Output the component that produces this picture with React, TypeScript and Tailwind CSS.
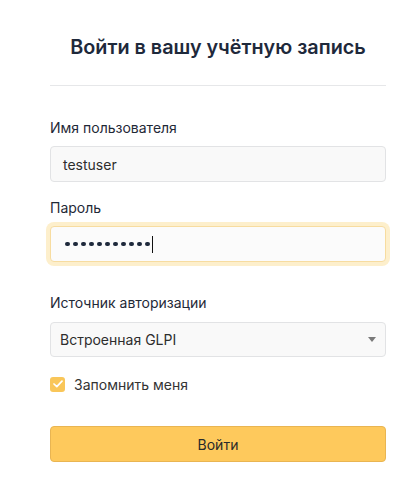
export default function App() {
  return (
    <div className="min-h-screen bg-white font-['Inter',sans-serif] text-[#1f2937]">
      <div className="ml-[50px] w-[336px] pt-[33px]">
        <h1 className="text-center text-[19.8px] font-semibold leading-[28px] text-[#1e293b]">
          Войти в вашу учётную запись
        </h1>
        <div className="mt-[24px] h-px bg-[#e6e7e9]" />

        <label className="mt-[32px] block text-[14px] leading-[20px] text-[#1f2937]">
          Имя пользователя
        </label>
        <div className="mt-2 flex h-[36px] items-center rounded border border-[#e2e3e5] bg-[#f9f9f9] px-3 text-[14px] text-[#2d2d2d]">
          testuser
        </div>

        <label className="mt-4 block text-[14px] leading-[20px] text-[#1f2937]">Пароль</label>
        <div className="mt-2 flex h-[36px] items-center rounded border border-[#f7dca0] bg-[#fbfbfb] pl-[14px] pr-3 text-[14px] text-[#1f2937] ring-4 ring-[#fdefcc]">
          <span className="flex gap-[3.5px]">
            {Array.from({ length: 11 }).map((_, i) => (
              <span key={i} className="h-[4.5px] w-[4.5px] rounded-full bg-[#1e293b]" />
            ))}
          </span>
          <span className="ml-[2px] h-[17px] w-px bg-[#111]" />
        </div>

        <label className="mt-[31px] block text-[14px] leading-[20px] text-[#1f2937]">
          Источник авторизации
        </label>
        <div className="mt-[9px] flex h-[35px] items-center justify-between rounded border border-[#e2e3e5] bg-[#f9f9f9] pl-[9px] pr-[8px] text-[14px] text-[#2d2d2d]">
          <span>Встроенная GLPI</span>
          <svg width="8" height="5" viewBox="0 0 8 5" className="mr-px">
            <path d="M0 0h8L4 5z" fill="#7a7a7a" />
          </svg>
        </div>

        <div className="mt-[17px] flex h-[20px] items-center gap-[9px]">
          <span className="flex h-[15px] w-[15px] items-center justify-center rounded-[3px] bg-[#f9c659]">
            <svg width="10" height="8" viewBox="0 0 10 8" fill="none">
              <path d="M1 4l2.8 2.6L9 1.2" stroke="#fff" strokeWidth="1.7" strokeLinecap="round" strokeLinejoin="round" />
            </svg>
          </span>
          <span className="text-[14px] text-[#333]">Запомнить меня</span>
        </div>

        <button className="mt-[32px] flex h-[36px] w-full items-center justify-center rounded border border-[#e9b552] bg-[#fec95c] text-[14px] text-[#2a2a2a]">
          Войти
        </button>
      </div>
    </div>
  );
}
